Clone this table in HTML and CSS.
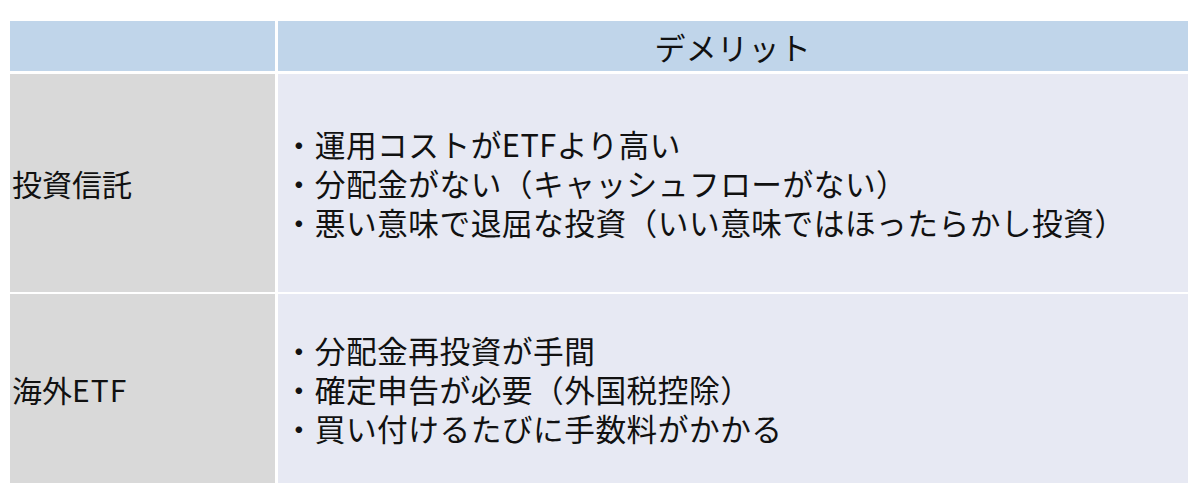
FILE: index.html
```html
<!DOCTYPE html>
<html lang="ja">
<head>
<meta charset="utf-8">
<link rel="stylesheet" href="styles.css">
</head>
<body>
<div class="table">
  <div class="cell head corner"></div>
  <div class="cell head title">デメリット</div>
  <div class="cell label">投資信託</div>
  <div class="cell body">
    <p>・運用コストがETFより高い</p>
    <p>・分配金がない（キャッシュフローがない）</p>
    <p>・悪い意味で退屈な投資（いい意味ではほったらかし投資）</p>
  </div>
  <div class="cell label">海外<span class="latin">ETF</span></div>
  <div class="cell body">
    <p>・分配金再投資が手間</p>
    <p>・確定申告が必要（外国税控除）</p>
    <p>・買い付けるたびに手数料がかかる</p>
  </div>
</div>
</body>
</html>
```

FILE: styles.css
```css
html, body {
  margin: 0;
  padding: 0;
  background: #ffffff;
}
body {
  padding: 21px 0 0 10px;
  font-family: "Noto Sans CJK JP", "Noto Sans", sans-serif;
  color: #111111;
}
.table {
  display: grid;
  grid-template-columns: 265px 910.5px;
  grid-template-rows: 50px 218px 189px;
  gap: 2.5px;
}
.cell {
  display: flex;
  align-items: center;
  font-size: 30px;
  line-height: 1;
}
.head {
  background: #c0d5ea;
}
.title {
  justify-content: center;
  font-size: 31px;
  letter-spacing: 0.3px;
}
.label {
  background: #d9d9d9;
  padding-left: 2px;
}
.latin {
  letter-spacing: 1px;
}
.body {
  background: #e7e9f3;
  flex-direction: column;
  align-items: flex-start;
  justify-content: center;
  padding-left: 6px;
  font-size: 30.7px;
  letter-spacing: 0.5px;
}
.body p {
  margin: 0;
  line-height: 39px;
}
```
